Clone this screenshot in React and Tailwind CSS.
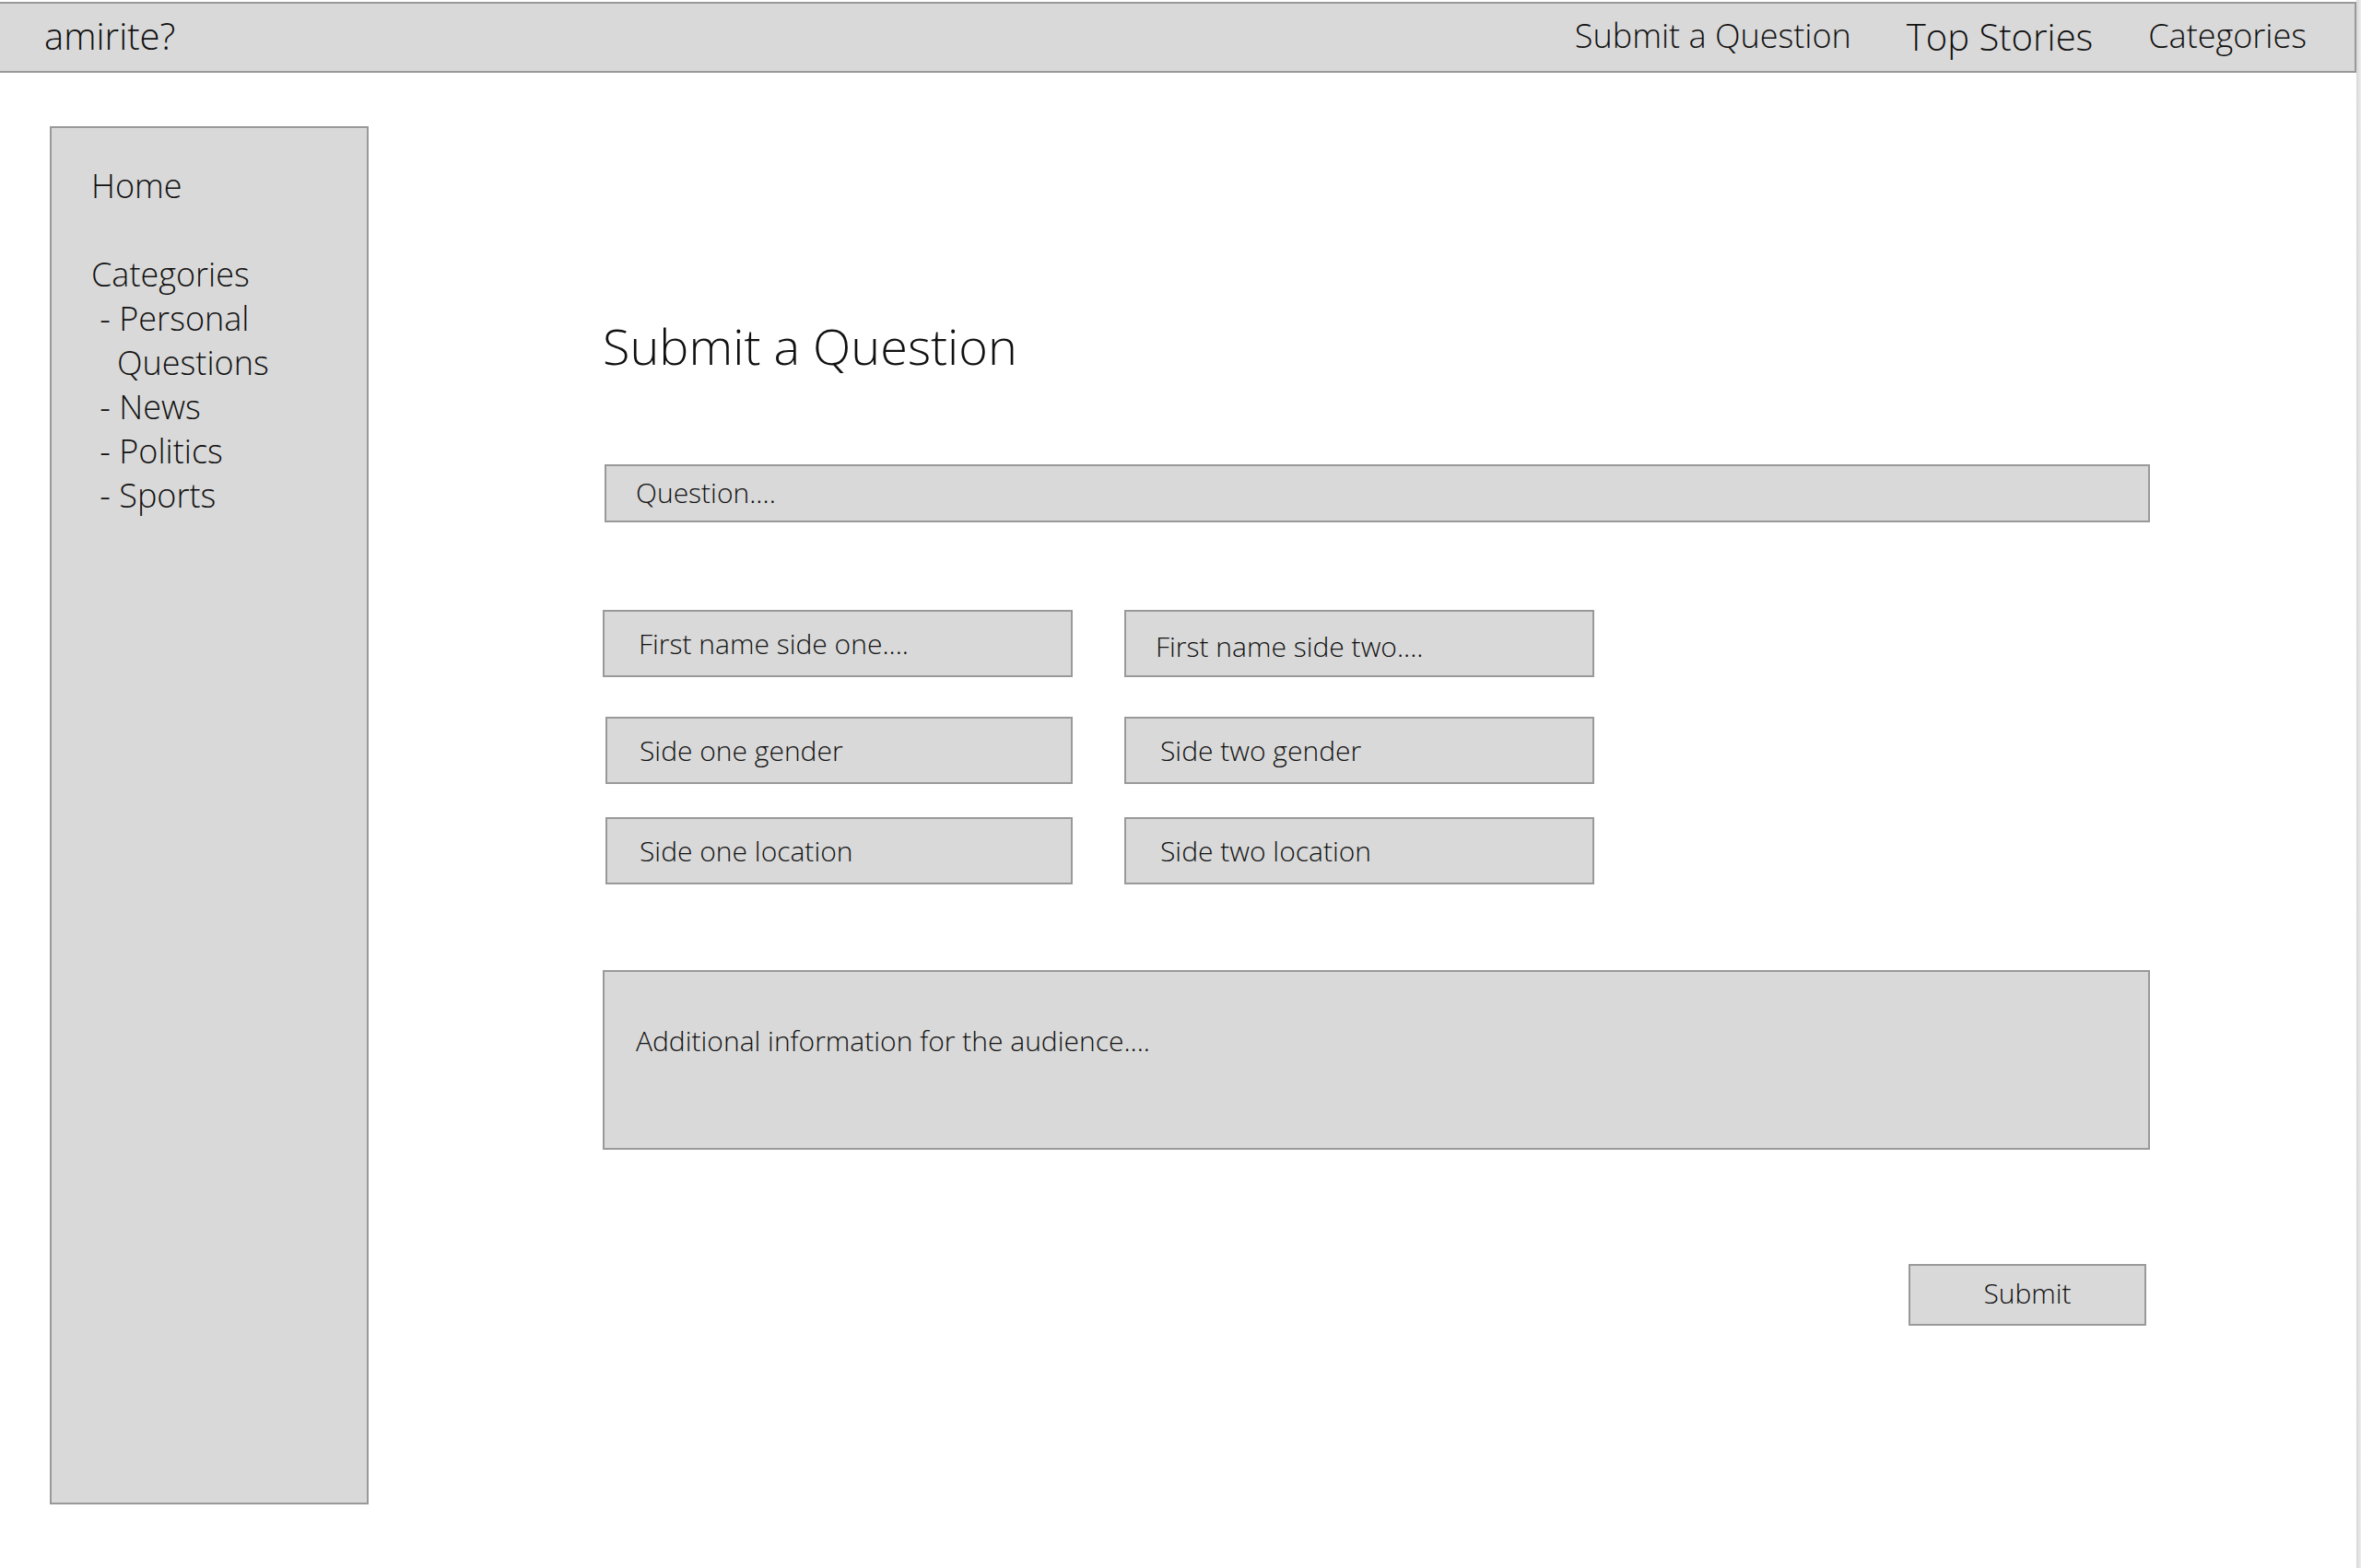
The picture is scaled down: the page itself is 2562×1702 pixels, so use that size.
import React from "react";

const box = "bg-[#d9d9d9] border-2 border-[#999999]";

function Field({ label, className = "" }) {
  return (
    <div className={`${box} h-[73px] flex items-center text-[30px] ${className}`}>
      {label}
    </div>
  );
}

function Sidebar() {
  return (
    <aside className={`${box} ml-[54px] mt-[58px] w-[346px] h-[1496px] pl-[43px] pt-[39px] text-[36px] leading-[48px] whitespace-pre`}>
      <div>Home</div>
      <div>&nbsp;</div>
      <div>Categories</div>
      <div> - Personal</div>
      <div>   Questions</div>
      <div> - News</div>
      <div> - Politics</div>
      <div> - Sports</div>
    </aside>
  );
}

export default function App() {
  return (
    <div className="min-h-screen w-full bg-white flex font-['Open_Sans',sans-serif] font-light text-[#111111]">
      <div className="w-[2557px] flex flex-col">
        <header className="mt-[2px] h-[77px] bg-[#d9d9d9] border-t-2 border-b-2 border-r-2 border-[#999999] flex items-center justify-between pl-[48px] pr-[52px] pb-[4px]">
          <div className="text-[40px]">amirite?</div>
          <nav className="flex items-center gap-[60px] text-[36px]">
            <span className="ml-[3px]">Submit a Question</span>
            <span className="text-[40px] pt-[3px]">Top Stories</span>
            <span>Categories</span>
          </nav>
        </header>

        <div className="flex">
          <Sidebar />

          <main className="ml-[254px] pt-[263px] w-[1679px]">
            <h1 className="text-[54px] leading-[67px]">Submit a Question</h1>

            <div className={`${box} mt-[95px] ml-[2px] h-[63px] flex items-center pl-[32px] pb-[3px] text-[30px]`}>
              Question....
            </div>

            <div className="mt-[95px] grid grid-cols-[510px_510px] gap-x-[56px] w-fit">
              <Field label="First name side one...." className="pl-[37px]" />
              <Field label="First name side two...." className="pt-[6px] pl-[32px]" />
              <Field label="Side one gender" className="mt-[43px] ml-[3px] pl-[35px]" />
              <Field label="Side two gender" className="mt-[43px] pl-[37px]" />
              <Field label="Side one location" className="mt-[36px] ml-[3px] pl-[35px]" />
              <Field label="Side two location" className="mt-[36px] pl-[37px]" />
            </div>

            <div className={`${box} mt-[93px] h-[195px] pl-[34px] pt-[52px] text-[30px] leading-[45px]`}>
              Additional information for the audience....
            </div>

            <div className="flex justify-end pr-[4px] mt-[124px]">
              <button className={`${box} w-[258px] h-[67px] flex items-center justify-center pb-[5px] text-[30px] font-light`}>
                Submit
              </button>
            </div>
          </main>
        </div>
      </div>
      <div className="w-[5px] bg-gradient-to-r from-[#d6d6d6] to-[#efefef]" />
    </div>
  );
}
